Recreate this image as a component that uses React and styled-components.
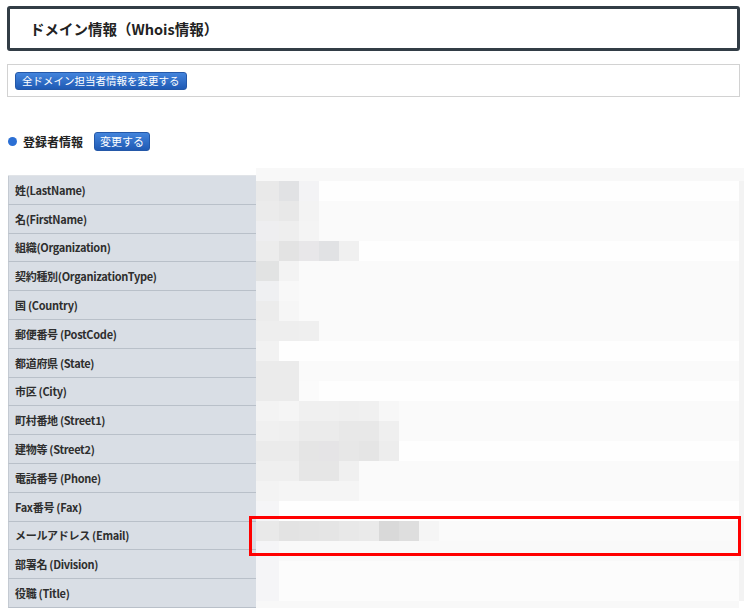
import React from 'react'
import styled, { createGlobalStyle } from 'styled-components'

const GlobalStyle = createGlobalStyle`
    body {
        margin: 0;
        background: #fff;
        font-family: "Noto Sans CJK JP", "Noto Sans", sans-serif;
        color: #333;
    }
`

const Page = styled.div`
    width: 750px;
    padding: 6px 10px 0 7px;
    box-sizing: border-box;
`

const TitleBox = styled.div`
    height: 45px;
    box-sizing: border-box;
    border: 3px solid #323d46;
    border-radius: 3px;
    display: flex;
    align-items: center;
    padding-left: 20px;
    padding-bottom: 1px;
    font-size: 14.5px;
    font-weight: bold;
    color: #222;
`

const ActionBox = styled.div`
    margin-top: 13px;
    height: 33px;
    box-sizing: border-box;
    border: 1px solid #d2d2d2;
    padding: 7px 0 0 7px;
    display: flex;
    align-items: flex-start;
`

const BlueButton = styled.button`
    height: ${p => p.$h || 18}px;
    padding: 0 ${p => p.$px || 6}px;
    border: 1px solid #2458a8;
    border-radius: 3px;
    background: linear-gradient(#4384dc, #1f5ab4);
    color: #fff;
    font-family: "Noto Sans CJK JP", sans-serif;
    font-size: ${p => p.$fs || 10.5}px;
    line-height: 1;
    cursor: pointer;
`

const SectionRow = styled.div`
    margin-top: 35px;
    display: flex;
    align-items: center;
    height: 19px;
    padding-left: 1px;
`

const Dot = styled.span`
    width: 9px;
    height: 9px;
    border-radius: 50%;
    background: #2b6fd4;
    margin-right: 6px;
`

const SectionTitle = styled.span`
    font-size: 12px;
    font-weight: bold;
    color: #222;
    margin-right: 11px;
`

const Table = styled.div`
    position: relative;
    margin-top: 24px;
    margin-left: 1px;
    border-top: 1px solid #e1e4e8;
`

const Row = styled.div`
    display: flex;
    height: 28.8px;
`

const Label = styled.div`
    width: 250px;
    box-sizing: border-box;
    background: #d9dee5;
    border-left: 1px solid #c4cad2;
    border-bottom: 1px solid #b9c0c9;
    display: flex;
    align-items: center;
    padding-left: 6px;
    font-size: 11px;
    font-weight: bold;
    letter-spacing: -0.3px;
    color: #2e2e2e;
`

const Value = styled.div`
    flex: 1;
    background: #fff;
`

const Mosaic = styled.div`
    position: absolute;
    left: 248px;
    top: -8px;
    display: grid;
    grid-template-columns: 3px repeat(24, 20px) 5px;
    grid-template-rows: 13px repeat(21, 20px) 10px;
`

const Block = styled.div`
    background: ${p => p.$c};
`

const Highlight = styled.div`
    position: absolute;
    left: 241px;
    top: 340px;
    width: 492px;
    height: 40px;
    box-sizing: border-box;
    border: 3px solid #ff0000;
`

const labels = [
    '姓(LastName)',
    '名(FirstName)',
    '組織(Organization)',
    '契約種別(OrganizationType)',
    '国 (Country)',
    '郵便番号 (PostCode)',
    '都道府県 (State)',
    '市区 (City)',
    '町村番地 (Street1)',
    '建物等 (Street2)',
    '電話番号 (Phone)',
    'Fax番号 (Fax)',
    'メールアドレス (Email)',
    '部署名 (Division)',
    '役職 (Title)',
]

// redacted value column: per 20px row, rest colour + leading block colours
const mosaicRows = [
    ['#fefefe', ['#e9e9e9', '#e1e2e4', '#f3f3f5']],
    ['#fafafa', ['#ebebeb', '#e8e8e8', '#f3f3f3']],
    ['#fafafa', ['#eeeef0', '#eeeeee', '#f4f4f4']],
    ['#fefefe', ['#ececec', '#e3e3e3', '#e8e7e9', '#e1e2e4', '#f0f0f0']],
    ['#fafafa', ['#e2e3e3', '#f3f3f3']],
    ['#fafafa', ['#eff0f2', '#f8f8f8']],
    ['#fafafa', ['#ececec', '#f6f6f6']],
    ['#fafafa', ['#eeeeee', '#eeeeee', '#efefef']],
    ['#fefefe', ['#f2f2f2']],
    ['#fafafa', ['#ebebeb', '#ebebeb']],
    ['#fefefe', ['#ebebeb', '#ebebeb', '#fbfbfb']],
    ['#fafafa', ['#f3f3f3', '#f5f5f5', '#f0f0f0', '#f0f0f0', '#efefef', '#f0f0f0', '#f7f7f7']],
    ['#fafafa', ['#f0f0f0', '#efefef', '#ebebeb', '#ebebeb', '#e8e8e8', '#e8e8e8', '#efefef']],
    ['#fefefe', ['#ebebeb', '#ebebeb', '#e5e5e5', '#e5e4e6', '#e7e7e7', '#e5e5e5', '#ededed']],
    ['#fafafa', ['#efefef', '#efefef', '#e6e6e6', '#e6e6e6', '#f0f0f0']],
    ['#fafafa', ['#f3f3f3', '#f5f5f5', '#f5f5f5', '#f5f5f5', '#f5f5f5']],
    ['#fefefe', ['#f5f5f7']],
    ['#fafafa', ['#e9e9e9', '#e3e3e3', '#e4e4e4', '#e5e5e5', '#e8e8e8', '#eaeaea', '#d9d9d9', '#dedede', '#f5f5f5']],
    ['#f9f9f9', ['#f5f5f7']],
    ['#fcfcfc', ['#f5f5f7']],
    ['#fcfcfc', ['#f5f5f7']],
]

const buildMosaic = () => {
    const cells = []
    for (let c = 0; c < 26; c++) cells.push('#f8f8f8')
    mosaicRows.forEach(([rest, lead]) => {
        cells.push(lead[0] || rest)
        for (let c = 0; c < 24; c++) cells.push(lead[c] || rest)
        cells.push('#f3f3f3')
    })
    for (let c = 0; c < 26; c++) cells.push(c === 25 ? '#ffffff' : '#f8f8f8')
    return cells
}

export default function App() {
    const cells = buildMosaic()
    return (
        <Page>
            <GlobalStyle />
            <TitleBox>ドメイン情報（Whois情報）</TitleBox>
            <ActionBox>
                <BlueButton>全ドメイン担当者情報を変更する</BlueButton>
            </ActionBox>
            <SectionRow>
                <Dot />
                <SectionTitle>登録者情報</SectionTitle>
                <BlueButton $h={19} $px={5} $fs={11}>変更する</BlueButton>
            </SectionRow>
            <Table>
                {labels.map(l => (
                    <Row key={l}>
                        <Label>{l}</Label>
                        <Value />
                    </Row>
                ))}
                <Mosaic>
                    {cells.map((c, i) => <Block key={i} $c={c} />)}
                </Mosaic>
                <Highlight />
            </Table>
        </Page>
    )
}
